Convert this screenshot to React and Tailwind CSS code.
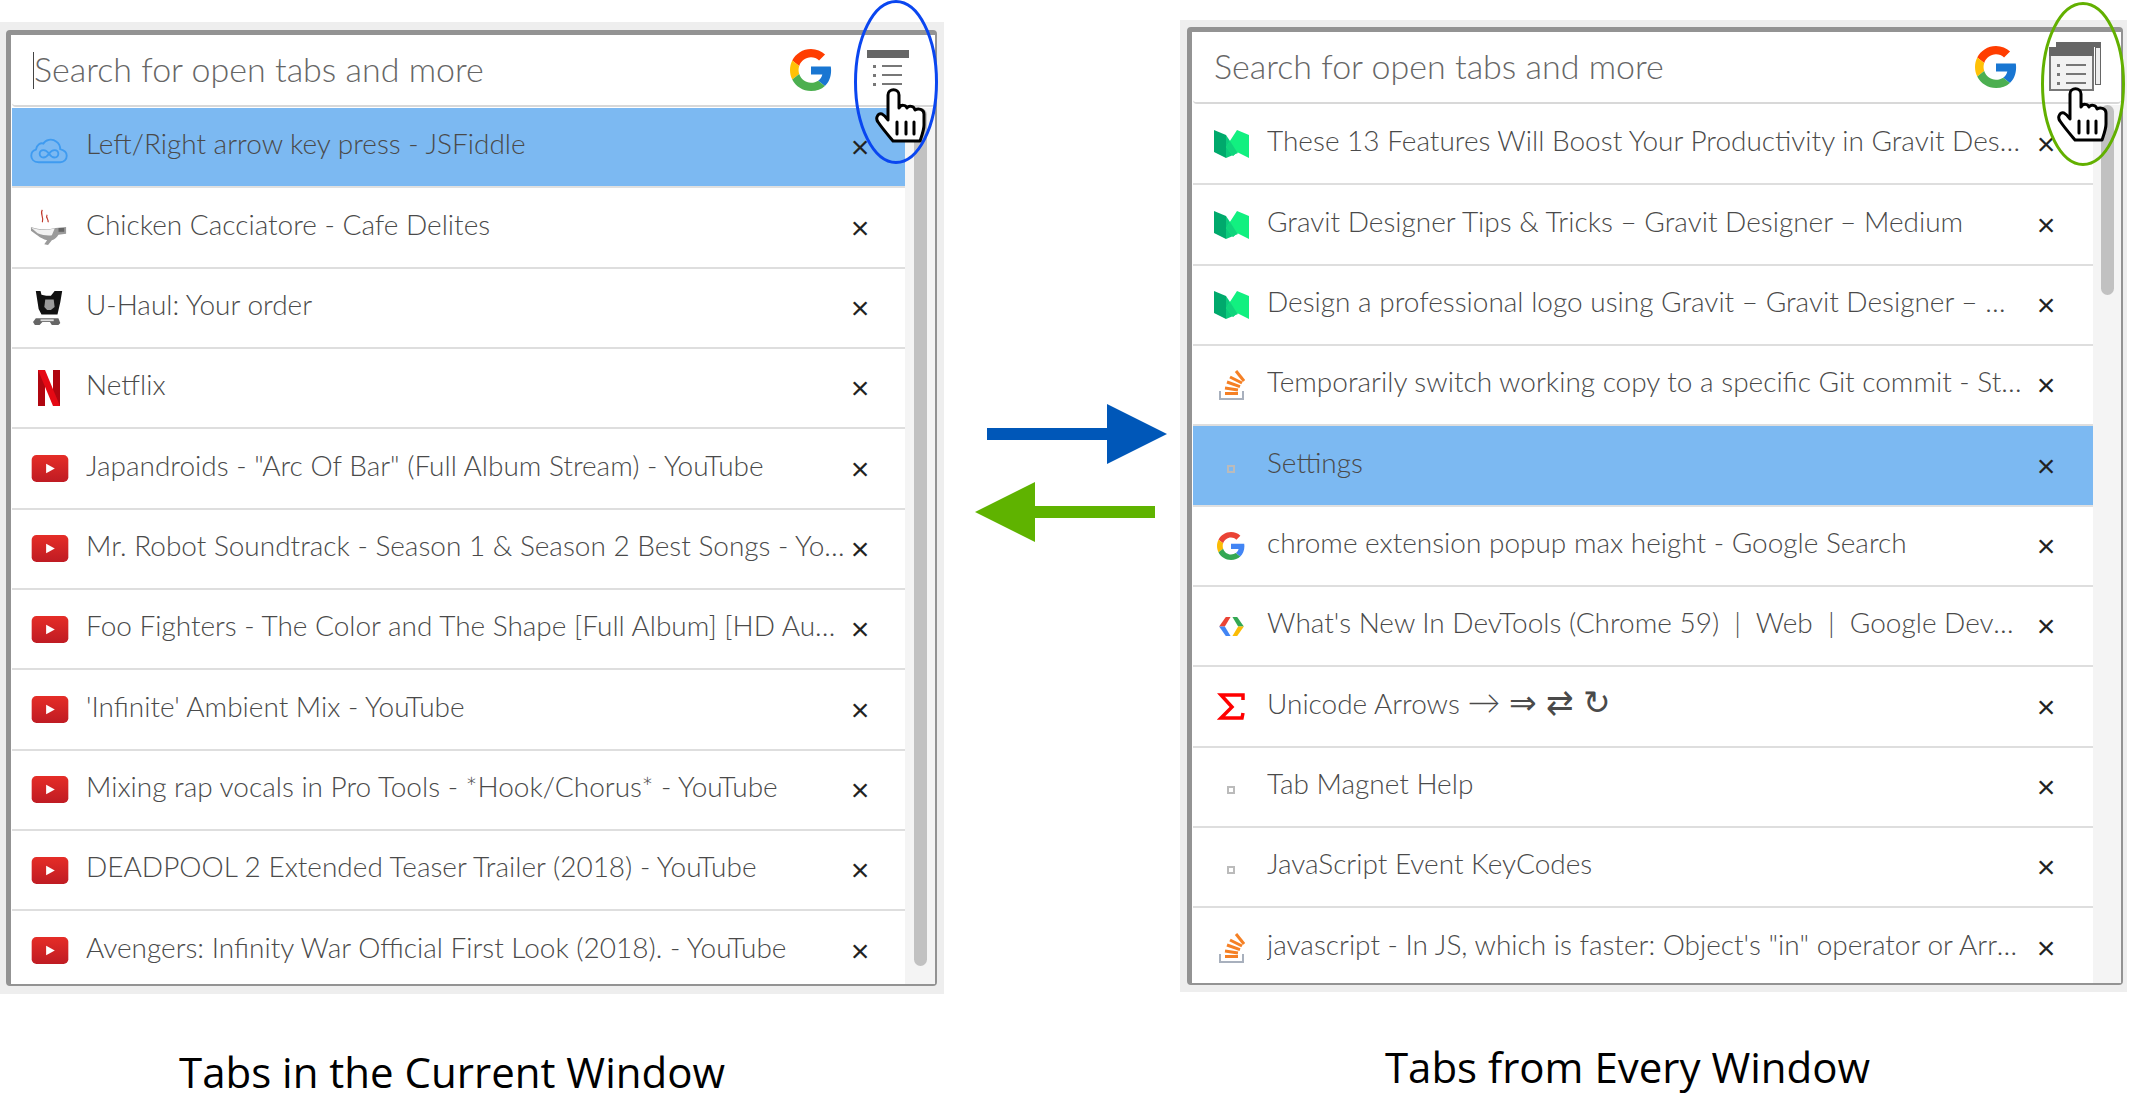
function GoogleLogo({ className, bright }) {
  return (
    <svg viewBox="0 0 48 48" className={className}>
      <path fill={bright ? "#FF3D00" : "#EA4335"} d="M24 9.5c3.54 0 6.71 1.22 9.21 3.6l6.85-6.85C35.9 2.38 30.47 0 24 0 14.62 0 6.51 5.38 2.56 13.22l7.98 6.19C12.43 13.72 17.74 9.5 24 9.5z" />
      <path fill={bright ? "#1976D2" : "#4285F4"} d="M46.98 24.55c0-1.57-.15-3.09-.38-4.55H24v9.02h12.94c-.58 2.96-2.26 5.48-4.78 7.18l7.73 6c4.51-4.18 7.09-10.36 7.09-17.65z" />
      <path fill={bright ? "#FFC107" : "#FBBC05"} d="M10.53 28.59c-.48-1.45-.76-2.99-.76-4.59s.27-3.14.76-4.59l-7.98-6.19C.92 16.46 0 20.12 0 24c0 3.88.92 7.54 2.56 10.78l7.97-6.19z" />
      <path fill={bright ? "#4CAF50" : "#34A853"} d="M24 48c6.48 0 11.93-2.13 15.89-5.81l-7.73-6c-2.15 1.45-4.92 2.3-8.16 2.3-6.26 0-11.57-4.22-13.47-9.91l-7.98 6.19C6.51 42.62 14.62 48 24 48z" />
    </svg>
  );
}

function Favicon({ type }) {
  if (type === "jsfiddle") {
    return (
      <svg viewBox="0 0 40 30" className="w-[38px] h-[28px] mt-[8px]" fill="none" stroke="#3f9bf0" strokeWidth="2">
        <path d="M9 27C3 27 1 23 1 20c0-4 3-6 5-6.500C7 8 11 6 14 7c2-4 9-6 14-2 3 2 4 5 4 8 4 1 7 3 7 7 0 4-3 7-7 7z" />
        <path d="M20 18c-2-3-4-4-6-4-2.500 0-4 2-4 4s1.500 4 4 4c2 0 4-1 6-4zm0 0c2-3 4-4 6-4 2.500 0 4 2 4 4s-1.500 4-4 4c-2 0-4-1-6-4z" />
      </svg>
    );
  }
  if (type === "cafe") {
    return (
      <svg viewBox="0 0 40 40" className="w-[40px] h-[38px]">
        <path d="M13 1c-3 4 2 7 0 13M18 6c-2 3 2 5 1 8" stroke="#c0392b" strokeWidth="1.200" fill="none" />
        <path d="M1 19c8 3 18 3 26 1l11-1v7l-8 1c-2 3-4 5-7 6l-4 5-4-1 3-4C10 31 6 26 1 23z" fill="#9a9a9a" />
        <path d="M1 19.500c8 3 17 3 25 1l-3 7c-3 1-10 0-15-2z" fill="#f1f1f1" />
        <rect x="30" y="20" width="6" height="4" fill="#666" />
      </svg>
    );
  }
  if (type === "uhaul") {
    return (
      <svg viewBox="0 0 34 38" className="w-[32px] h-[36px]">
        <path d="M3 1h5l1 4 5 1h5l4-5h8l-2 12-3 13H9L6 20z" fill="#111" />
        <path d="M13 10h9l1 8-4 3h-4l-3-3z" fill="#999" />
        <path d="M3 30h24l2 5-2 2h-7l-2-3h-8l-3 3H2l-2-3z" fill="#666" />
        <path d="M8 31h14v2H8z" fill="#ddd" />
      </svg>
    );
  }
  if (type === "netflix") {
    return (
      <svg viewBox="0 0 22 36" className="w-[22px] h-[36px]">
        <path d="M0 0h7v36l-7 0z" fill="#b00610" />
        <path d="M15 0h7v36h-7z" fill="#b00610" />
        <path d="M0 0h7l15 36h-7z" fill="#e50914" />
      </svg>
    );
  }
  if (type === "youtube") {
    return (
      <svg viewBox="0 0 38 28" className="w-[38px] h-[27px] ml-[2px]">
        <defs>
          <linearGradient id="ytRed" x1="0" y1="0" x2="0" y2="1">
            <stop offset="0" stopColor="#e52d27" />
            <stop offset="1" stopColor="#bf1b23" />
          </linearGradient>
        </defs>
        <rect width="38" height="28" rx="5" fill="url(#ytRed)" />
        <path d="M15 9l9 5-9 5z" fill="#fff" />
      </svg>
    );
  }
  if (type === "medium") {
    return (
      <svg viewBox="0 0 36 30" className="w-[36px] h-[30px] ml-[3px]">
        <path d="M0 1l12 5v23L0 23z" fill="#00a96c" />
        <path d="M12 6l12 18-12 5z" fill="#0bcb7c" />
        <path d="M23 1l12 5v23l-12-6-4 4-7-9z" fill="#12f080" />
        <path d="M12 18l7 9 4-4-7-11z" fill="#10d47c" />
      </svg>
    );
  }
  if (type === "stack") {
    return (
      <svg viewBox="0 0 26 30" className="w-[26px] h-[30px] ml-[3px]">
        <path d="M1 21v8h23v-8" fill="none" stroke="#a8b0bd" strokeWidth="2" />
        <g stroke="#f58025" strokeWidth="3" fill="none">
          <path d="M6 23.500h13" />
          <path d="M6 18l13 2" />
          <path d="M8 12l13 4.700" />
          <path d="M11 7l12 6" />
          <path d="M17 1l8 10" />
        </g>
      </svg>
    );
  }
  if (type === "google") return <GoogleLogo className="w-[28px] h-[28px] ml-[2px]" />;
  if (type === "devtools") {
    return (
      <svg viewBox="0 0 28 20" className="w-[27px] h-[19px] ml-[2px]">
        <path d="M8 0h5l-6 10H1z" fill="#ea4335" />
        <path d="M1 10h6l6 10H8z" fill="#4285f4" />
        <path d="M15 0h5l7 10h-6z" fill="#34a853" />
        <path d="M21 10h6l-7 10h-5z" fill="#fbbc05" />
      </svg>
    );
  }
  if (type === "sigma") {
    return (
      <svg viewBox="0 0 28 30" className="w-[28px] h-[30px] ml-[2px]" fill="none" stroke="#f00" strokeWidth="3.500">
        <path d="M26 8V3H4l11 12L4 26h21l1-5" />
      </svg>
    );
  }
  return <div className="w-[8px] h-[8px] border-2 border-[#bbb] mt-[6px] ml-[2px]"></div>;
}

function ListToggle() {
  return (
    <svg viewBox="0 0 42 36" className="w-[42px] h-[36px] mb-[4px]">
      <rect width="42" height="8" fill="#666" />
      <g fill="#777">
        <rect x="6" y="15" width="3" height="3" />
        <rect x="6" y="24" width="3" height="3" />
        <rect x="6" y="33" width="3" height="3" />
        <rect x="15" y="15" width="20" height="2" />
        <rect x="15" y="24" width="20" height="2" />
        <rect x="15" y="33" width="20" height="2" />
      </g>
    </svg>
  );
}

function WindowsToggle() {
  return (
    <svg viewBox="0 0 52 50" className="w-[52px] h-[50px] mb-[1px]">
      <path d="M7 0h45v43h-6V5H7z" fill="#666" />
      <path d="M47 6h4v36h-4z" fill="#eee" />
      <rect x="1" y="6" width="43" height="42" fill="#f2f2f2" stroke="#777" strokeWidth="2" />
      <rect x="0" y="5" width="45" height="9" fill="#666" />
      <g fill="#777">
        <rect x="8" y="22" width="3" height="3" />
        <rect x="8" y="31" width="3" height="3" />
        <rect x="8" y="40" width="3" height="3" />
        <rect x="17" y="22" width="20" height="2" />
        <rect x="17" y="31" width="20" height="2" />
        <rect x="17" y="40" width="20" height="2" />
      </g>
    </svg>
  );
}

function HandCursor({ className }) {
  return (
    <svg viewBox="0 0 52 56" className={className} fill="#fff" stroke="#000" strokeWidth="3" strokeLinejoin="round" strokeLinecap="round">
      <path d="M13 7C13 0 24 0 24 7V20C26 16 31 17 32 20 34 17 39 18 40 22 43 20 49 21 49 26V37C49 42 47 47 45 53H18C13 47 7 40 3 34 0 30 3 25 7 26 9 27 11 29 13 32Z" />
      <path d="M22 34V46M31 34V46M39 34V46" fill="none" />
    </svg>
  );
}

function Panel({ tabs, selected, toggle, caret, boxClass, searchClass, rowsClass, logoClass, closeClass, thumbClass }) {
  return (
    <div className={`bg-[#eeeeee] ${boxClass}`}>
      <div className="h-full flex flex-col bg-white rounded-[4px] border-t-[5px] border-l-[5px] border-r-2 border-b-2 border-[#939393]">
        <div className={`h-[72px] shrink-0 flex items-center rounded-sm border-b-2 border-[#d8d8d8] ${searchClass}`}>
          <div className="flex-1 min-w-0 flex items-center">
            {caret && <div className="w-[1px] h-[37px] bg-[#444]"></div>}
            <span className="text-[34px] font-light text-[#666] whitespace-nowrap pb-[4px]">Search for open tabs and more</span>
          </div>
          <GoogleLogo bright className={logoClass} />
          {toggle}
        </div>
        <div className="flex-1 min-h-0 flex overflow-hidden pt-[1px]">
          <div className={rowsClass}>
            {tabs.map((tab, i) => (
              <div key={i} className={`h-[80.35px] flex items-center border-b-2 ${i === selected ? "bg-[#7cb9f2] border-[#e0e0e0]" : "border-[#dedede]"}`}>
                <div className="w-[74px] shrink-0 flex justify-center">
                  <Favicon type={tab.icon} />
                </div>
                <div className="flex-1 min-w-0 truncate text-[28px] font-light text-[#4a4a4a] pb-[8px]">{tab.title}</div>
                <div className={closeClass}>×</div>
              </div>
            ))}
          </div>
          <div className="flex-1 flex justify-center bg-[#f4f4f4]">
            <div className={`w-[13px] bg-[#c1c1c1] rounded-full ${thumbClass}`}></div>
          </div>
        </div>
      </div>
    </div>
  );
}

const currentTabs = [
  { icon: "jsfiddle", title: "Left/Right arrow key press - JSFiddle" },
  { icon: "cafe", title: "Chicken Cacciatore - Cafe Delites" },
  { icon: "uhaul", title: "U-Haul: Your order" },
  { icon: "netflix", title: "Netflix" },
  { icon: "youtube", title: 'Japandroids - "Arc Of Bar" (Full Album Stream) - YouTube' },
  { icon: "youtube", title: "Mr. Robot Soundtrack - Season 1 & Season 2 Best Songs - YouTube" },
  { icon: "youtube", title: "Foo Fighters - The Color and The Shape [Full Album] [HD Audio]" },
  { icon: "youtube", title: "'Infinite' Ambient Mix - YouTube" },
  { icon: "youtube", title: "Mixing rap vocals in Pro Tools - *Hook/Chorus* - YouTube" },
  { icon: "youtube", title: "DEADPOOL 2 Extended Teaser Trailer (2018) - YouTube" },
  { icon: "youtube", title: "Avengers: Infinity War Official First Look (2018). - YouTube" },
];

const everyTabs = [
  { icon: "medium", title: "These 13 Features Will Boost Your Productivity in Gravit Designer – Medium" },
  { icon: "medium", title: "Gravit Designer Tips & Tricks – Gravit Designer – Medium" },
  { icon: "medium", title: "Design a professional logo using Gravit – Gravit Designer – Medium" },
  { icon: "stack", title: "Temporarily switch working copy to a specific Git commit - Stack Overflow" },
  { icon: "blank", title: "Settings" },
  { icon: "google", title: "chrome extension popup max height - Google Search" },
  { icon: "devtools", title: "What's New In DevTools (Chrome 59)\u00a0 |\u00a0 Web\u00a0 |\u00a0 Google Developers" },
  { icon: "sigma", title: <>Unicode Arrows <span className="text-[33px] leading-none">→ ⇒ ⇄ ↻</span></> },
  { icon: "blank", title: "Tab Magnet Help" },
  { icon: "blank", title: "JavaScript Event KeyCodes" },
  { icon: "stack", title: "javascript - In JS, which is faster: Object's \"in\" operator or Array's indexOf?" },
];

export default function App() {
  return (
    <div className="relative w-[2133px] h-[1100px] overflow-hidden bg-white flex font-['Lato',sans-serif]">
      <div className="w-[944px] shrink-0 pt-[22px]">
        <Panel
          tabs={currentTabs}
          selected={0}
          caret
          toggle={<div className="w-[103px] flex justify-start pl-[35px]"><ListToggle /></div>}
          boxClass="h-[972px] pt-[8px] pb-[8px] pl-[6px] pr-[7px]"
          searchClass="pl-[21px] ml-[1px]"
          rowsClass="w-[893px] shrink-0 ml-[1px]"
          logoClass="w-[42px] h-[42px] shrink-0"
          closeClass="w-[60px] shrink-0 pr-[30px] text-center text-[32px] leading-none text-[#222] font-['Liberation_Sans',sans-serif]"
          thumbClass="h-[858px]"
        />
        <div className="text-center text-[42px] text-black font-['Open_Sans',sans-serif] mt-[57px] pr-[40px] leading-none">Tabs in the Current Window</div>
      </div>
      <div className="w-[236px] shrink-0 pt-[404px]">
        <svg viewBox="0 0 236 138" className="w-[236px] h-[138px]">
          <path d="M43 24H163V0L223 30 163 60V36H43Z" fill="#0057b8" />
          <path d="M211 102H91V78L31 108 91 138V114H211Z" fill="#5fb300" />
        </svg>
      </div>
      <div className="w-[947px] shrink-0 pt-[20px]">
        <Panel
          tabs={everyTabs}
          selected={4}
          toggle={<div className="w-[104px] flex justify-start pl-[32px]"><WindowsToggle /></div>}
          boxClass="h-[972px] w-[947px] pt-[7px] pb-[7px] pl-[7px] pr-[4px]"
          searchClass="pl-[21px] ml-[1px]"
          rowsClass="w-[900px] shrink-0 ml-[1px]"
          logoClass="w-[42px] h-[42px] shrink-0"
          closeClass="w-[68px] shrink-0 pr-[26px] text-center text-[32px] leading-none text-[#222] font-['Liberation_Sans',sans-serif]"
          thumbClass="h-[190px]"
        />
        <div className="text-center text-[42px] text-black font-['Open_Sans',sans-serif] mt-[54px] pr-[52px] leading-none">Tabs from Every Window</div>
      </div>

      {/* callouts over the toggle buttons */}
      <svg viewBox="0 0 84 164" className="absolute left-[854px] top-0 w-[84px] h-[164px]" fill="none" stroke="#0a46f0" strokeWidth="3">
        <ellipse cx="42" cy="82" rx="40.500" ry="80.500" />
      </svg>
      <HandCursor className="absolute left-[875px] top-[88px] w-[52px] h-[56px]" />
      <svg viewBox="0 0 84 164" className="absolute left-[2041px] top-[2px] w-[84px] h-[164px]" fill="none" stroke="#62b000" strokeWidth="3">
        <ellipse cx="42" cy="82" rx="40.500" ry="80.500" />
      </svg>
      <HandCursor className="absolute left-[2057px] top-[87px] w-[52px] h-[56px]" />
    </div>
  );
}
